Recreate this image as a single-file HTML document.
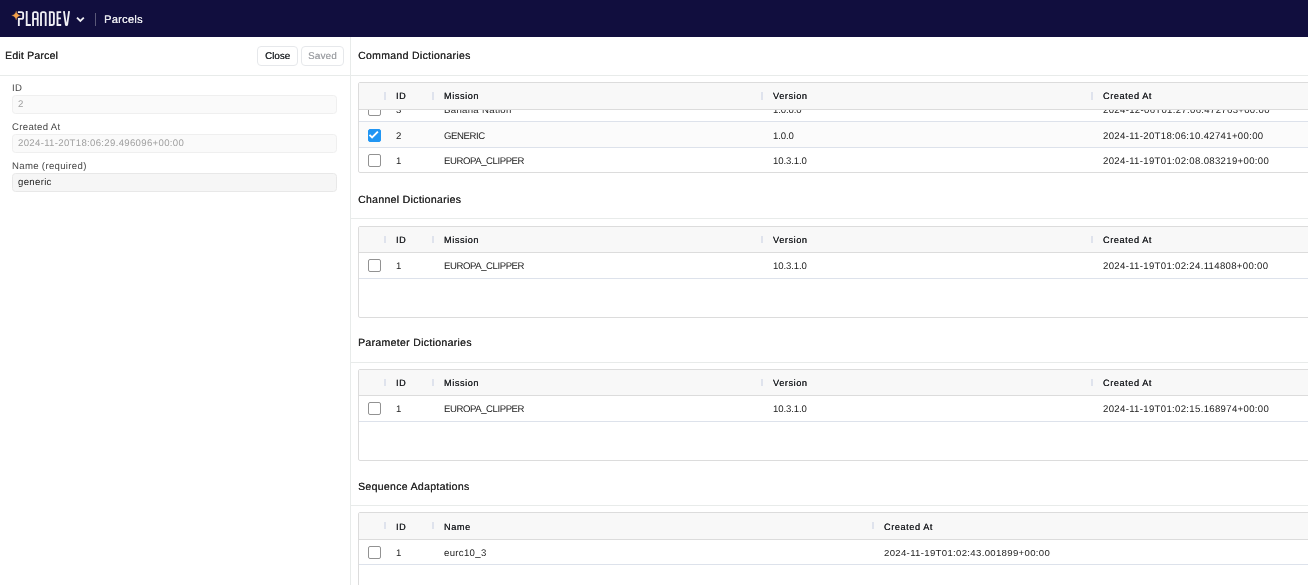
<!DOCTYPE html><html><head><meta charset="utf-8"><style>
*{box-sizing:border-box;margin:0;padding:0}
html{background:#fff}
html,body{width:1308px;height:585px;overflow:hidden;font-family:"Liberation Sans",sans-serif;color:#1f1f1f}
#root{position:absolute;left:0;top:0;width:1308px;height:585px;will-change:transform;overflow:hidden}
.a{position:absolute;white-space:nowrap}
.t{position:absolute;white-space:nowrap;line-height:12px;transform:matrix(1,0,0.001,1,0,0);transform-origin:0 0}
#nav{position:absolute;left:0;top:0;width:1308px;height:37px;background:#110e3e}
.hb{position:absolute;height:1px;background:#e8ebea}
.btn{position:absolute;height:20px;border:1px solid #e6e8eb;border-radius:4px;background:#fff}
.inp{position:absolute;left:12px;width:325px;height:19px;border:1px solid #efefef;border-radius:3.5px;background:#fafafa}
.tbl{position:absolute;left:358px;width:1100px;border:1px solid #dcdcdc;border-radius:2px;overflow:hidden;background:#fff}
.hdr{position:absolute;left:0;top:0;right:0;height:26px;background:#f8f8f8;border-bottom:1px solid #dcdcdc}
.sep{position:absolute;top:9px;width:2px;height:7px;background:#dfe3ed}
.row{position:absolute;left:0;right:0;height:25.5px;border-bottom:1px solid #dde2eb}
.cb{position:absolute;left:9.3px;top:6px;width:13px;height:13px;border:1.9px solid #929292;border-radius:2px;background:#fff}
.cb.on{background:#2196f3;border-color:#2196f3}
.cb svg{position:absolute;left:-1.9px;top:-1.9px}
</style></head><body><div id="root">
<div id="nav">
<svg width="150" height="37" style="position:absolute;left:0;top:0">
<path d="M16.15 10.9 Q16.8 14.8 20.6 15.45 Q16.8 16.1 16.15 20 Q15.5 16.1 11.7 15.45 Q15.5 14.8 16.15 10.9 Z" fill="#f5a24a" stroke="#f5a24a" stroke-width="0.2" stroke-linejoin="round"/>
<g fill="none" stroke="#efeff4" stroke-width="1.85">
<path d="M17.9 12.05 H21.5 A1.65 1.65 0 0 1 23.15 13.7 V17.2 A1.65 1.65 0 0 1 21.5 18.85 H18.85 V26"/>
<path d="M26.7 11.1 V24.95 H30.9"/>
<path d="M33.05 26 V13.7 A1.6 1.6 0 0 1 34.65 12.05 H36.1 A1.6 1.6 0 0 1 37.7 13.7 V26 M33.05 18.9 H37.7"/>
<path d="M41 26 V13.7 A1.6 1.6 0 0 1 42.6 12.05 H44.1 A1.6 1.6 0 0 1 45.7 13.7 V26"/>
<path d="M49.8 12.05 H52.3 A1.6 1.6 0 0 1 53.9 13.65 V23.35 A1.6 1.6 0 0 1 52.3 24.95 H49.8 Z"/>
<path d="M61.2 12.05 H57.5 V24.95 H61.2 M57.5 18.4 H60.9"/>
<path d="M63.9 11.1 L65.9 24.95 H67.1 L69.1 11.1" stroke-linejoin="round"/>
<path d="M77 17.6 L80.35 21 L83.8 17.6" stroke-width="1.8"/>
</g>
<rect x="95" y="13" width="1" height="13" fill="#5a5878"/>
</svg>
<div class="t" style="left:104px;top:13px;font-size:11px;letter-spacing:0.3px;color:#ebebf0;text-shadow:0.3px 0 0 #ebebf0;">Parcels</div>
</div>
<div class="t" style="left:5px;top:49px;font-size:10.5px;letter-spacing:0.2px;color:#2a2a2a;text-shadow:0.3px 0 0 #2a2a2a;">Edit Parcel</div>
<div class="btn" style="left:257px;top:46px;width:41px"></div>
<div class="btn" style="left:301px;top:46px;width:43px"></div>
<div class="t" style="left:265px;top:50px;font-size:9.8px;letter-spacing:0px;color:#2e3135;text-shadow:0.3px 0 0 #2e3135;">Close</div>
<div class="t" style="left:308px;top:50px;font-size:9.8px;letter-spacing:0.2px;color:#a2a4a8;text-shadow:0.3px 0 0 #a2a4a8;">Saved</div>
<div class="hb" style="left:0;top:75px;width:350px"></div>
<div class="a" style="left:350px;top:37px;width:1px;height:548px;background:#e8ebea"></div>
<div class="t" style="left:11.5px;top:82px;font-size:9.6px;letter-spacing:0.32px;color:#474747;">ID</div>
<div class="inp" style="top:95px"></div>
<div class="t" style="left:18px;top:98px;font-size:9.6px;letter-spacing:0.32px;color:#a0a0a0;">2</div>
<div class="t" style="left:11.5px;top:121px;font-size:9.6px;letter-spacing:0.32px;color:#474747;">Created At</div>
<div class="inp" style="top:134px"></div>
<div class="t" style="left:18px;top:137px;font-size:9.6px;letter-spacing:0.32px;color:#a0a0a0;">2024-11-20T18:06:29.496096+00:00</div>
<div class="t" style="left:11.5px;top:160px;font-size:9.6px;letter-spacing:0.32px;color:#474747;">Name (required)</div>
<div class="inp" style="top:173px;background:#f6f6f6;border-color:#e8e8e8"></div>
<div class="t" style="left:18px;top:176px;font-size:9.6px;letter-spacing:0.32px;color:#262626;">generic</div>
<div class="t" style="left:358px;top:49px;font-size:10.5px;letter-spacing:0.32px;color:#2b2b2b;text-shadow:0.15px 0 0 #2b2b2b;">Command Dictionaries</div>
<div class="hb" style="left:351px;top:75px;width:957px"></div>
<div class="tbl" style="top:82px;height:91px">
<div class="row" style="top:13.5px;height:25.5px;">
<div class="cb" style="top:6.6px"></div>
<div class="t" style="left:37px;top:7.6px;font-size:9.6px;letter-spacing:0.32px;color:#1c1c1c;">3</div>
<div class="t" style="left:85px;top:7.6px;font-size:9.6px;letter-spacing:0.32px;color:#1c1c1c;">Banana Nation</div>
<div class="t" style="left:414px;top:7.6px;font-size:9.6px;letter-spacing:-0.12px;color:#1c1c1c;">1.0.0.0</div>
<div class="t" style="left:744px;top:7.6px;font-size:9.6px;letter-spacing:0.32px;color:#1c1c1c;">2024-12-06T01:27:06.472763+00:00</div>
</div>
<div class="row" style="top:39.0px;height:25.5px;background:#fbfbfb;">
<div class="cb on" style="top:6.6px"><svg width="13" height="13"><path d="M2.5 6.9 L5.1 9.5 L10.9 3.7" fill="none" stroke="#fff" stroke-width="1.9"/></svg></div>
<div class="t" style="left:37px;top:7.6px;font-size:9.6px;letter-spacing:0.32px;color:#1c1c1c;">2</div>
<div class="t" style="left:85px;top:7.6px;font-size:9.6px;letter-spacing:-0.44px;color:#1c1c1c;">GENERIC</div>
<div class="t" style="left:414px;top:7.6px;font-size:9.6px;letter-spacing:-0.12px;color:#1c1c1c;">1.0.0</div>
<div class="t" style="left:744px;top:7.6px;font-size:9.6px;letter-spacing:0.32px;color:#1c1c1c;">2024-11-20T18:06:10.42741+00:00</div>
</div>
<div class="row" style="top:64.5px;height:25.5px;">
<div class="cb" style="top:6.6px"></div>
<div class="t" style="left:37px;top:7.6px;font-size:9.6px;letter-spacing:0.32px;color:#1c1c1c;">1</div>
<div class="t" style="left:85px;top:7.6px;font-size:9.6px;letter-spacing:-0.44px;color:#1c1c1c;">EUROPA_CLIPPER</div>
<div class="t" style="left:414px;top:7.6px;font-size:9.6px;letter-spacing:-0.12px;color:#1c1c1c;">10.3.1.0</div>
<div class="t" style="left:744px;top:7.6px;font-size:9.6px;letter-spacing:0.32px;color:#1c1c1c;">2024-11-19T01:02:08.083219+00:00</div>
</div>
<div class="hdr" style="height:27px">
<div class="sep" style="left:25px;height:8px"></div>
<div class="t" style="left:37px;top:7.0px;font-size:9.2px;letter-spacing:0.55px;color:#1e2024;text-shadow:0.1px 0 0 #1e2024;">ID</div>
<div class="sep" style="left:73px;height:8px"></div>
<div class="t" style="left:85px;top:7.0px;font-size:9.2px;letter-spacing:0.55px;color:#1e2024;text-shadow:0.1px 0 0 #1e2024;">Mission</div>
<div class="sep" style="left:402px;height:8px"></div>
<div class="t" style="left:414px;top:7.0px;font-size:9.2px;letter-spacing:0.55px;color:#1e2024;text-shadow:0.1px 0 0 #1e2024;">Version</div>
<div class="sep" style="left:732px;height:8px"></div>
<div class="t" style="left:744px;top:7.0px;font-size:9.2px;letter-spacing:0.55px;color:#1e2024;text-shadow:0.1px 0 0 #1e2024;">Created At</div>
</div></div>
<div class="t" style="left:358px;top:193px;font-size:10.5px;letter-spacing:0.32px;color:#2b2b2b;text-shadow:0.15px 0 0 #2b2b2b;">Channel Dictionaries</div>
<div class="hb" style="left:351px;top:218px;width:957px"></div>
<div class="tbl" style="top:226px;height:92px">
<div class="row" style="top:26px;height:25.5px;">
<div class="cb" style="top:6px"></div>
<div class="t" style="left:37px;top:6.5px;font-size:9.6px;letter-spacing:0.32px;color:#1c1c1c;">1</div>
<div class="t" style="left:85px;top:6.5px;font-size:9.6px;letter-spacing:-0.44px;color:#1c1c1c;">EUROPA_CLIPPER</div>
<div class="t" style="left:414px;top:6.5px;font-size:9.6px;letter-spacing:-0.12px;color:#1c1c1c;">10.3.1.0</div>
<div class="t" style="left:744px;top:6.5px;font-size:9.6px;letter-spacing:0.32px;color:#1c1c1c;">2024-11-19T01:02:24.114808+00:00</div>
</div>
<div class="hdr" style="height:26px">
<div class="sep" style="left:25px;height:7px"></div>
<div class="t" style="left:37px;top:7px;font-size:9.2px;letter-spacing:0.55px;color:#1e2024;text-shadow:0.1px 0 0 #1e2024;">ID</div>
<div class="sep" style="left:73px;height:7px"></div>
<div class="t" style="left:85px;top:7px;font-size:9.2px;letter-spacing:0.55px;color:#1e2024;text-shadow:0.1px 0 0 #1e2024;">Mission</div>
<div class="sep" style="left:402px;height:7px"></div>
<div class="t" style="left:414px;top:7px;font-size:9.2px;letter-spacing:0.55px;color:#1e2024;text-shadow:0.1px 0 0 #1e2024;">Version</div>
<div class="sep" style="left:732px;height:7px"></div>
<div class="t" style="left:744px;top:7px;font-size:9.2px;letter-spacing:0.55px;color:#1e2024;text-shadow:0.1px 0 0 #1e2024;">Created At</div>
</div></div>
<div class="t" style="left:358px;top:336px;font-size:10.5px;letter-spacing:0.32px;color:#2b2b2b;text-shadow:0.15px 0 0 #2b2b2b;">Parameter Dictionaries</div>
<div class="hb" style="left:351px;top:362px;width:957px"></div>
<div class="tbl" style="top:369px;height:92px">
<div class="row" style="top:26px;height:25.5px;">
<div class="cb" style="top:6px"></div>
<div class="t" style="left:37px;top:6.5px;font-size:9.6px;letter-spacing:0.32px;color:#1c1c1c;">1</div>
<div class="t" style="left:85px;top:6.5px;font-size:9.6px;letter-spacing:-0.44px;color:#1c1c1c;">EUROPA_CLIPPER</div>
<div class="t" style="left:414px;top:6.5px;font-size:9.6px;letter-spacing:-0.12px;color:#1c1c1c;">10.3.1.0</div>
<div class="t" style="left:744px;top:6.5px;font-size:9.6px;letter-spacing:0.32px;color:#1c1c1c;">2024-11-19T01:02:15.168974+00:00</div>
</div>
<div class="hdr" style="height:26px">
<div class="sep" style="left:25px;height:7px"></div>
<div class="t" style="left:37px;top:7px;font-size:9.2px;letter-spacing:0.55px;color:#1e2024;text-shadow:0.1px 0 0 #1e2024;">ID</div>
<div class="sep" style="left:73px;height:7px"></div>
<div class="t" style="left:85px;top:7px;font-size:9.2px;letter-spacing:0.55px;color:#1e2024;text-shadow:0.1px 0 0 #1e2024;">Mission</div>
<div class="sep" style="left:402px;height:7px"></div>
<div class="t" style="left:414px;top:7px;font-size:9.2px;letter-spacing:0.55px;color:#1e2024;text-shadow:0.1px 0 0 #1e2024;">Version</div>
<div class="sep" style="left:732px;height:7px"></div>
<div class="t" style="left:744px;top:7px;font-size:9.2px;letter-spacing:0.55px;color:#1e2024;text-shadow:0.1px 0 0 #1e2024;">Created At</div>
</div></div>
<div class="t" style="left:358px;top:480px;font-size:10.5px;letter-spacing:0.32px;color:#2b2b2b;text-shadow:0.15px 0 0 #2b2b2b;">Sequence Adaptations</div>
<div class="hb" style="left:351px;top:505px;width:957px"></div>
<div class="tbl" style="top:512px;height:120px">
<div class="row" style="top:27px;height:25px;">
<div class="cb" style="top:6px"></div>
<div class="t" style="left:37px;top:7px;font-size:9.6px;letter-spacing:0.32px;color:#1c1c1c;">1</div>
<div class="t" style="left:85px;top:7px;font-size:9.6px;letter-spacing:0.32px;color:#1c1c1c;">eurc10_3</div>
<div class="t" style="left:525px;top:7px;font-size:9.6px;letter-spacing:0.32px;color:#1c1c1c;">2024-11-19T01:02:43.001899+00:00</div>
</div>
<div class="hdr" style="height:27px">
<div class="sep" style="left:25px;height:7px"></div>
<div class="t" style="left:37px;top:7.6px;font-size:9.2px;letter-spacing:0.55px;color:#1e2024;text-shadow:0.1px 0 0 #1e2024;">ID</div>
<div class="sep" style="left:73px;height:7px"></div>
<div class="t" style="left:85px;top:7.6px;font-size:9.2px;letter-spacing:0.55px;color:#1e2024;text-shadow:0.1px 0 0 #1e2024;">Name</div>
<div class="sep" style="left:513px;height:7px"></div>
<div class="t" style="left:525px;top:7.6px;font-size:9.2px;letter-spacing:0.55px;color:#1e2024;text-shadow:0.1px 0 0 #1e2024;">Created At</div>
</div></div>
</div></body></html>
